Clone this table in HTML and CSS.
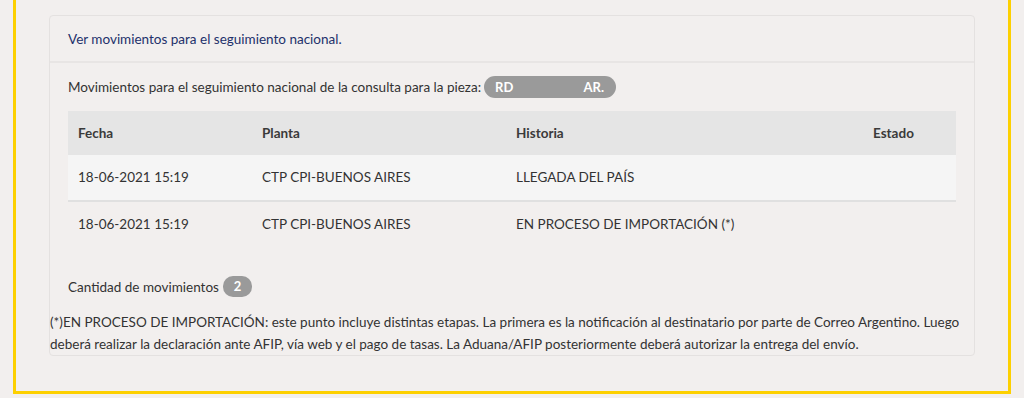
FILE: index.html
```html
<!DOCTYPE html>
<html lang="es">
<head>
    <meta charset="UTF-8">
    <meta name="viewport" content="width=device-width, initial-scale=1.0">
    <title>Seguimiento nacional</title>
    <link rel="stylesheet" href="styles.css">
</head>
<body>
    <div class="frame">
        <div class="panel">
            <div class="panel-heading">Ver movimientos para el seguimiento nacional.</div>
            <div class="panel-body">
                <p class="lead">
                    Movimientos para el seguimiento nacional de la consulta para la pieza:
                    <span class="pill"><span>RD</span><span>AR.</span></span>
                </p>
                <table class="moves">
                    <thead>
                        <tr>
                            <th class="col-date">Fecha</th>
                            <th class="col-plant">Planta</th>
                            <th class="col-story">Historia</th>
                            <th class="col-state">Estado</th>
                        </tr>
                    </thead>
                    <tbody>
                        <tr class="striped">
                            <td>18-06-2021 15:19</td>
                            <td>CTP CPI-BUENOS AIRES</td>
                            <td>LLEGADA DEL PAÍS</td>
                            <td></td>
                        </tr>
                        <tr>
                            <td>18-06-2021 15:19</td>
                            <td>CTP CPI-BUENOS AIRES</td>
                            <td>EN PROCESO DE IMPORTACIÓN (*)</td>
                            <td></td>
                        </tr>
                    </tbody>
                </table>
                <p class="count">Cantidad de movimientos <span class="badge">2</span></p>
            </div>
            <p class="note">(*)EN PROCESO DE IMPORTACIÓN: este punto incluye distintas etapas. La primera es la notificación al destinatario por parte de Correo Argentino. Luego deberá realizar la declaración ante AFIP, vía web y el pago de tasas. La Aduana/AFIP posteriormente deberá autorizar la entrega del envío.</p>
        </div>
    </div>
</body>
</html>
```

FILE: styles.css
```css
body {
    margin: 0;
    background: #f2efee;
    font-family: Lato, "Open Sans", sans-serif;
    font-size: 13.5px;
    color: #333333;
}

.frame {
    box-sizing: border-box;
    margin-left: 13px;
    width: 998px;
    border: 3px solid #fdd000;
    border-top: 0;
    padding: 15px 33px 35px 33px;
}

.panel {
    border: 1px solid #e4e1e0;
    border-radius: 4px;
}

.panel-heading {
    padding: 12px 18px 11px 18px;
    line-height: 22px;
    color: #23316b;
    border-bottom: 2px solid #e8e5e4;
}

.panel-body {
    padding: 13px 18px 0 18px;
}

.lead {
    margin: 0;
    line-height: 22px;
    display: flex;
    align-items: center;
    gap: 3px;
}

.pill {
    display: inline-flex;
    justify-content: space-between;
    align-items: center;
    width: 132px;
    height: 22px;
    box-sizing: border-box;
    padding: 0 12px 0 11px;
    border-radius: 11px;
    background: #9a9a9a;
    color: #ffffff;
    font-weight: 700;
    font-size: 13px;
}

.moves {
    width: 888px;
    margin-top: 13px;
    border-collapse: collapse;
}

.moves th,
.moves td {
    text-align: left;
    padding: 0 10px;
    line-height: 44px;
}

.moves th {
    background: #e5e5e5;
    font-weight: 700;
    color: #3a3a3a;
}

.moves .striped td {
    background: #f5f5f5;
    border-bottom: 2px solid #e0e0e0;
    line-height: 45px;
}

.col-date { width: 164px; }
.col-plant { width: 234px; }
.col-story { width: 337px; }

.count {
    margin: 30px 0 0 0;
    line-height: 20px;
    display: flex;
    align-items: center;
    gap: 4px;
}

.badge {
    display: inline-block;
    width: 29px;
    height: 21px;
    line-height: 21px;
    border-radius: 10px;
    background: #9a9a9a;
    color: #ffffff;
    font-weight: 700;
    font-size: 13px;
    text-align: center;
}

.note {
    margin: 14px 0 0 0;
    line-height: 22px;
}
```
